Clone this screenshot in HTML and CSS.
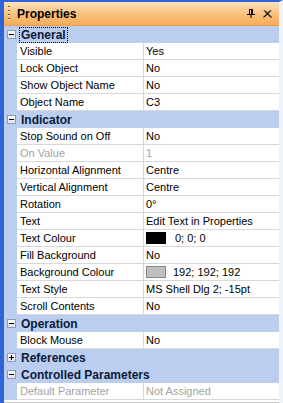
FILE: index.html
```html
<!DOCTYPE html>
<html lang="en">
  <head>
    <meta charset="UTF-8" />
    <title>Properties</title>
    <link rel="stylesheet" href="styles.css">
  </head>
  <body>
    <div class="panel">
      <div class="titlebar">
        <span class="grip"></span>
        <span class="title">Properties</span>
        <span class="tools">
          <svg class="pin" width="8" height="9" viewBox="0 0 8 9">
            <path d="M0 5.5h8M2 0.5h4M2.5 0.5v5M5.5 0.5v5M4 5.5v3.5M4.5 0.5v5" stroke="#000" fill="none"/>
          </svg>
          <svg class="close" width="9" height="8" viewBox="0 0 9 8">
            <path d="M1 0.5l7 7M8 0.5l-7 7M1.8 0.5l7 7M7.2 0.5l-7 7" stroke="#000" fill="none" stroke-width="1"/>
          </svg>
        </span>
      </div>

      <div class="grid">
        <div class="cat"><span class="exp minus"></span><span class="cat-name focus">General</span></div>
        <div class="row"><span class="gap"></span><span class="name">Visible</span><span class="val">Yes</span></div>
        <div class="row"><span class="gap"></span><span class="name">Lock Object</span><span class="val">No</span></div>
        <div class="row"><span class="gap"></span><span class="name">Show Object Name</span><span class="val">No</span></div>
        <div class="row"><span class="gap"></span><span class="name">Object Name</span><span class="val">C3</span></div>

        <div class="cat"><span class="exp minus"></span><span class="cat-name">Indicator</span></div>
        <div class="row"><span class="gap"></span><span class="name">Stop Sound on Off</span><span class="val">No</span></div>
        <div class="row off"><span class="gap"></span><span class="name">On Value</span><span class="val">1</span></div>
        <div class="row"><span class="gap"></span><span class="name">Horizontal Alignment</span><span class="val">Centre</span></div>
        <div class="row"><span class="gap"></span><span class="name">Vertical Alignment</span><span class="val">Centre</span></div>
        <div class="row"><span class="gap"></span><span class="name">Rotation</span><span class="val">0°</span></div>
        <div class="row"><span class="gap"></span><span class="name">Text</span><span class="val">Edit Text in Properties</span></div>
        <div class="row"><span class="gap"></span><span class="name">Text Colour</span><span class="val"><i class="swatch black"></i>0; 0; 0</span></div>
        <div class="row"><span class="gap"></span><span class="name">Fill Background</span><span class="val">No</span></div>
        <div class="row"><span class="gap"></span><span class="name">Background Colour</span><span class="val"><i class="swatch silver"></i>192; 192; 192</span></div>
        <div class="row"><span class="gap"></span><span class="name">Text Style</span><span class="val">MS Shell Dlg 2; -15pt</span></div>
        <div class="row"><span class="gap"></span><span class="name">Scroll Contents</span><span class="val">No</span></div>

        <div class="cat"><span class="exp minus"></span><span class="cat-name">Operation</span></div>
        <div class="row"><span class="gap"></span><span class="name">Block Mouse</span><span class="val">No</span></div>

        <div class="cat"><span class="exp plus"></span><span class="cat-name">References</span></div>

        <div class="cat"><span class="exp minus"></span><span class="cat-name">Controlled Parameters</span></div>
        <div class="row off"><span class="gap"></span><span class="name">Default Parameter</span><span class="val">Not Assigned</span></div>
      </div>
    </div>
  </body>
</html>
```

FILE: styles.css
```css
body {
  margin: 0;
  background: #eef3fb;
  font-family: "Liberation Sans", Arial, sans-serif;
  font-size: 11px;
  color: #000;
}

.panel {
  width: 283px;
  height: 403px;
  box-sizing: border-box;
  border-left: 4px solid #2f63d8;
  border-top: 2px solid #2f63d8;
  border-right: 4px solid #eef3fb;
  display: flex;
  flex-direction: column;
}

.titlebar {
  height: 23px;
  flex: none;
  display: flex;
  align-items: center;
  background: linear-gradient(#fde1b8, #f9c07c 55%, #f7ab58);
  border-bottom: 1px solid #e8a050;
}

.grip {
  width: 2px;
  height: 16px;
  margin-left: 4px;
  margin-right: 7px;
  background: repeating-linear-gradient(#7a5a30 0 1px, #fff3e0 1px 2px, transparent 2px 4px);
}

.title {
  font-weight: bold;
  font-size: 12px;
}

.tools {
  margin-left: auto;
  margin-right: 7px;
  display: flex;
  align-items: center;
  gap: 8px;
}

.grid {
  flex: 1;
  background: #fff;
  border-bottom: 1px solid #c8c8c8;
}

.row {
  display: grid;
  grid-template-columns: 13px 126px 1fr;
  height: 17px;
}

.gap {
  background: #bccef0;
}

.name,
.val {
  border-bottom: 1px solid #d8d8d8;
  line-height: 16px;
  white-space: nowrap;
  overflow: hidden;
}

.name {
  padding-left: 3px;
}

.val {
  border-left: 1px solid #d8d8d8;
  padding-left: 2px;
  display: flex;
  align-items: center;
}

.off .name,
.off .val {
  color: #a3a3a3;
}

.cat {
  display: flex;
  align-items: center;
  height: 17px;
  background: #bccef0;
}

.cat-name {
  font-weight: bold;
  font-size: 12px;
  color: #0a1a3a;
  line-height: 14px;
  padding: 0 1px;
  margin-left: 3px;
  border: 1px solid transparent;
}

.cat-name.focus {
  border: 1px dotted #000;
}

.exp {
  width: 7px;
  height: 7px;
  margin-left: 3px;
  border: 1px solid #8a9cb8;
  background: linear-gradient(#ffffff, #dde3ee);
  position: relative;
}

.exp::before {
  content: "";
  position: absolute;
  left: 1px;
  top: 3px;
  width: 5px;
  height: 1px;
  background: #000;
}

.exp.plus::after {
  content: "";
  position: absolute;
  left: 3px;
  top: 1px;
  width: 1px;
  height: 5px;
  background: #000;
}

.swatch {
  width: 18px;
  height: 10px;
  margin-right: 9px;
  border: 1px solid #888;
}

.swatch.black {
  background: #000;
  border-color: #000;
}

.swatch.silver {
  background: #c0c0c0;
  margin-right: 7px;
}
```
